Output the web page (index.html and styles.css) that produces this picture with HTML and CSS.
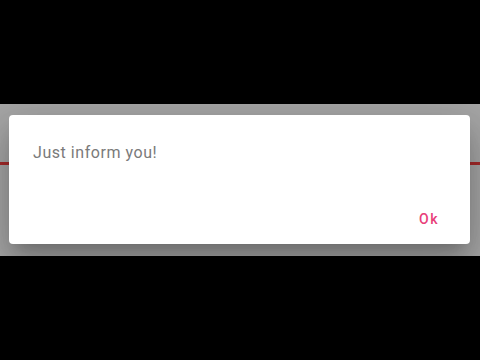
FILE: index.html
```html
<!DOCTYPE html>
<html>
<head>
<meta charset="utf-8">
<link rel="stylesheet" href="styles.css">
</head>
<body>
<div class="band">
  <div class="redline"></div>
  <div class="dialog">
    <div class="content">Just inform you!</div>
    <div class="actions"><span class="btn">Ok</span></div>
  </div>
</div>
</body>
</html>
```
FILE: styles.css
```css
html, body {
  margin: 0;
  padding: 0;
  background: #000;
  width: 480px;
  height: 360px;
  overflow: hidden;
}
.band {
  position: relative;
  margin-top: 104px;
  height: 152px;
  background: #a6a6a6;
  padding-top: 58px;
  box-sizing: border-box;
}
.redline {
  height: 3px;
  background: #a52a2a;
}
.dialog {
  position: absolute;
  left: 9px;
  top: 11px;
  width: 461px;
  height: 129px;
  background: #fff;
  border-radius: 4px;
  box-shadow: 0 11px 15px -7px rgba(0,0,0,.2), 0 24px 38px 3px rgba(0,0,0,.14), 0 9px 46px 8px rgba(0,0,0,.12);
  display: flex;
  flex-direction: column;
  justify-content: space-between;
  font-family: Roboto, "Liberation Sans", sans-serif;
}
.content {
  padding: 26px 24px 0;
  font-size: 16px;
  line-height: 24px;
  color: #7a7a7a;
  letter-spacing: 0.55px;
}
.actions {
  display: flex;
  justify-content: flex-end;
  padding: 0 31px 15px 0;
}
.btn {
  font-size: 14px;
  line-height: 20px;
  font-weight: 500;
  letter-spacing: 1.5px;
  color: #e8407a;
}
```
